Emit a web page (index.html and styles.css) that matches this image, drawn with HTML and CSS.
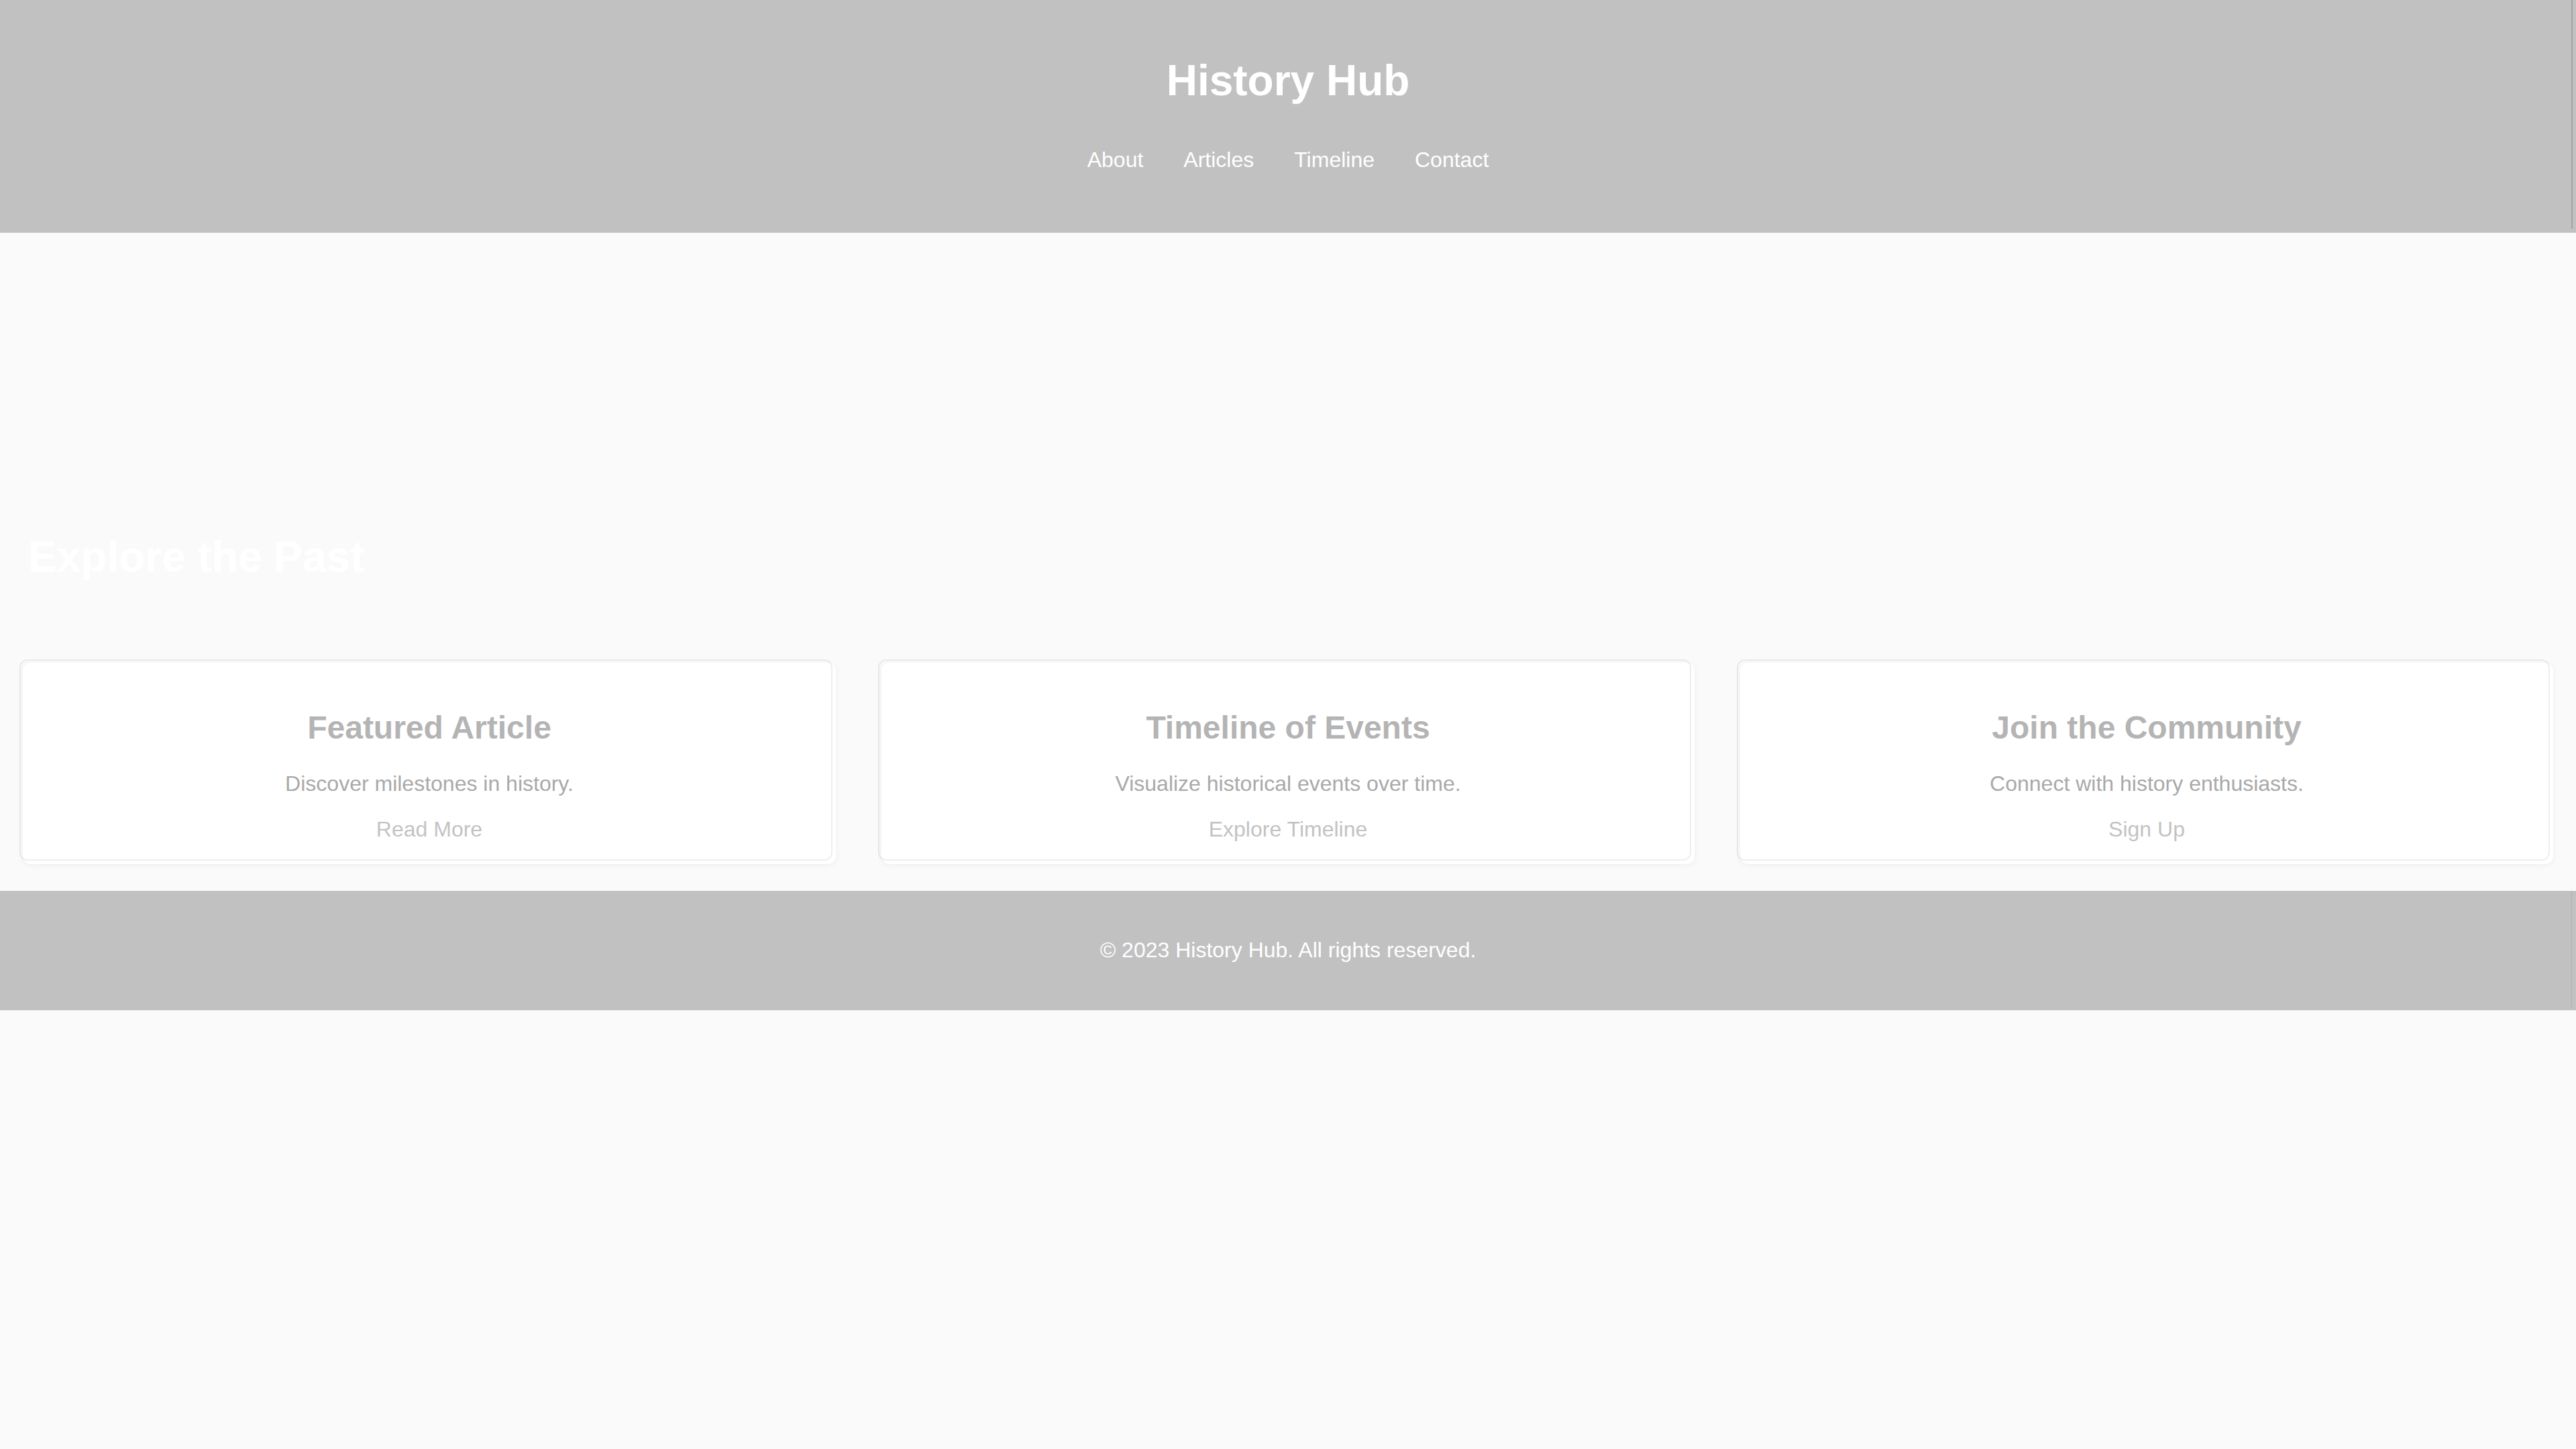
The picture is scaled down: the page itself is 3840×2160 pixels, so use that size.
FILE: index.html
```html
<!DOCTYPE html>
<html lang="en">
<head>
<meta charset="utf-8">
<title>History Hub</title>
<link rel="stylesheet" href="styles.css">
</head>
<body>
<header class="site-header">
  <h1 class="site-title">History Hub</h1>
  <nav class="site-nav">
    <ul class="nav-list">
      <li><a class="nav-link" href="#">About</a></li>
      <li><a class="nav-link" href="#">Articles</a></li>
      <li><a class="nav-link" href="#">Timeline</a></li>
      <li><a class="nav-link" href="#">Contact</a></li>
    </ul>
  </nav>
</header>
<section class="hero">
  <h2 class="hero-title">Explore the Past</h2>
</section>
<main class="cards">
  <div class="card">
    <h3 class="card-title">Featured Article</h3>
    <p class="card-text">Discover milestones in history.</p>
    <a class="card-link" href="#">Read More</a>
  </div>
  <div class="card">
    <h3 class="card-title">Timeline of Events</h3>
    <p class="card-text">Visualize historical events over time.</p>
    <a class="card-link" href="#">Explore Timeline</a>
  </div>
  <div class="card">
    <h3 class="card-title">Join the Community</h3>
    <p class="card-text">Connect with history enthusiasts.</p>
    <a class="card-link" href="#">Sign Up</a>
  </div>
</main>
<footer class="site-footer">
  <p class="footer-text">&copy; 2023 History Hub. All rights reserved.</p>
</footer>
</body>
</html>
```

FILE: styles.css
```css
html, body {
  margin: 0;
  padding: 0;
}
body {
  background: #fafafa;
  font-family: "Liberation Sans", Arial, sans-serif;
  font-size: 32px;
  color: #333;
}

.site-header {
  background:
    linear-gradient(to right, transparent calc(100% - 7px), #a3a3a3 calc(100% - 7px), #a3a3a3 calc(100% - 5px), transparent calc(100% - 5px)) no-repeat 0 0 / 100% 341px,
    #c1c1c1;
  color: #fff;
  text-align: center;
  padding: 40px 0;
}
.site-title {
  font-size: 64px;
  font-weight: bold;
  margin: 43px 0;
  line-height: normal;
}
.nav-list {
  list-style: none;
  margin: 0 0 30px;
  padding: 0;
  display: flex;
  justify-content: center;
  gap: 20px;
}
.nav-link {
  display: block;
  padding: 20px 20px;
  color: #fff;
  text-decoration: none;
}

.hero {
  padding: 446px 42px 81px;
}
.hero-title {
  margin: 0;
  font-size: 64px;
  font-weight: bold;
  color: #fff;
  line-height: normal;
}

.cards {
  display: grid;
  grid-template-columns: repeat(3, 1fr);
  gap: 68px;
  padding: 40px 34px 0;
}
.card {
  position: relative;
  background: #fff;
  border-radius: 12px;
  box-shadow: 0 2px 10px rgba(0, 0, 0, 0.05);
  text-align: center;
  padding: 32px 32px 33px;
}
.card::after {
  content: "";
  position: absolute;
  top: -5px;
  left: -5px;
  right: 5px;
  bottom: 5px;
  border: 2px solid rgba(0, 0, 0, 0.065);
  border-radius: 12px;
  pointer-events: none;
}
.card-title {
  font-size: 48px;
  font-weight: bold;
  margin: 37px 0 38px;
  line-height: normal;
  color: #b4b4b4;
}
.card-text {
  margin: 0 0 31px;
  color: #a9a9a9;
}
.card-link {
  display: block;
  color: #c3c3c3;
  text-decoration: none;
}

.site-footer {
  margin-top: 40px;
  background:
    linear-gradient(to right, transparent calc(100% - 7px), #b0b0b0 calc(100% - 7px), #b0b0b0 calc(100% - 6px), transparent calc(100% - 6px)) no-repeat 0 0 / 100% 174px,
    #c1c1c1;
  color: #fff;
  text-align: center;
  padding: 38px 0 39px;
}
.footer-text {
  margin: 32px 0;
}
```
